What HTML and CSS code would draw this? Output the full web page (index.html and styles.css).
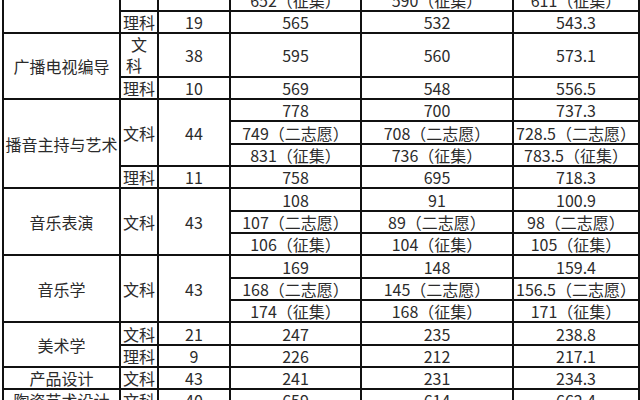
FILE: index.html
```html
<!DOCTYPE html>
<html lang="zh-CN">
<head>
<meta charset="utf-8">
<title>录取分数</title>
<link rel="stylesheet" href="styles.css">
</head>
<body>
<div class="sheet">
<table class="scores">
  <colgroup>
    <col class="c-name"><col class="c-type"><col class="c-num"><col class="c-a"><col class="c-b"><col class="c-c">
  </colgroup>
  <tbody>
    <tr><td rowspan="2"></td><td></td><td></td><td>652（征集）</td><td>590（征集）</td><td>611（征集）</td></tr>
    <tr><td>理科</td><td>19</td><td>565</td><td>532</td><td>543.3</td></tr>
    <tr class="double"><td rowspan="2">广播电视编导</td><td class="wrap"><span class="ind">文</span><br>科</td><td>38</td><td>595</td><td>560</td><td>573.1</td></tr>
    <tr><td>理科</td><td>10</td><td>569</td><td>548</td><td>556.5</td></tr>
    <tr><td rowspan="4">播音主持与艺术</td><td rowspan="3">文科</td><td rowspan="3">44</td><td>778</td><td>700</td><td>737.3</td></tr>
    <tr class="tall"><td>749（二志愿）</td><td>708（二志愿）</td><td>728.5（二志愿）</td></tr>
    <tr><td>831（征集）</td><td>736（征集）</td><td>783.5（征集）</td></tr>
    <tr><td>理科</td><td>11</td><td>758</td><td>695</td><td>718.3</td></tr>
    <tr class="tall"><td rowspan="3">音乐表演</td><td rowspan="3">文科</td><td rowspan="3">43</td><td>108</td><td>91</td><td>100.9</td></tr>
    <tr><td>107（二志愿）</td><td>89（二志愿）</td><td>98（二志愿）</td></tr>
    <tr><td>106（征集）</td><td>104（征集）</td><td>105（征集）</td></tr>
    <tr class="tall"><td rowspan="3">音乐学</td><td rowspan="3">文科</td><td rowspan="3">43</td><td>169</td><td>148</td><td>159.4</td></tr>
    <tr><td>168（二志愿）</td><td>145（二志愿）</td><td>156.5（二志愿）</td></tr>
    <tr><td>174（征集）</td><td>168（征集）</td><td>171（征集）</td></tr>
    <tr class="tall"><td rowspan="2">美术学</td><td>文科</td><td>21</td><td>247</td><td>235</td><td>238.8</td></tr>
    <tr><td>理科</td><td>9</td><td>226</td><td>212</td><td>217.1</td></tr>
    <tr><td>产品设计</td><td>文科</td><td>43</td><td>241</td><td>231</td><td>234.3</td></tr>
    <tr><td>陶瓷艺术设计</td><td>文科</td><td>40</td><td>659</td><td>614</td><td>662.4</td></tr>
  </tbody>
</table>
</div>
</body>
</html>
```
FILE: styles.css
```css
html, body {
  margin: 0;
  padding: 0;
  background: #ffffff;
}
body {
  width: 640px;
  height: 400px;
  overflow: hidden;
}
.sheet {
  padding-left: 2px;
}
.scores {
  margin-top: -12px;
  border-collapse: collapse;
  table-layout: fixed;
  width: 636px;
  font-family: "Noto Sans CJK SC", "Noto Sans", sans-serif;
  font-size: 16px;
  color: #2b2b2b;
}
.c-name { width: 117px; }
.c-type { width: 38px; }
.c-num { width: 72px; }
.c-a { width: 131px; }
.c-b { width: 152px; }
.c-c { width: 126px; }
.scores td {
  border: 2px solid #111111;
  padding: 0;
  height: 20px;
  line-height: 20px;
  text-align: center;
  vertical-align: middle;
  white-space: nowrap;
  overflow: hidden;
}
.scores tr.tall td {
  height: 21px;
}
.scores tr.double td {
  height: 41px;
}
.scores td.wrap {
  text-align: left;
  padding-left: 5px;
  line-height: 21px;
  white-space: normal;
}
.ind {
  padding-left: 5px;
}
```
